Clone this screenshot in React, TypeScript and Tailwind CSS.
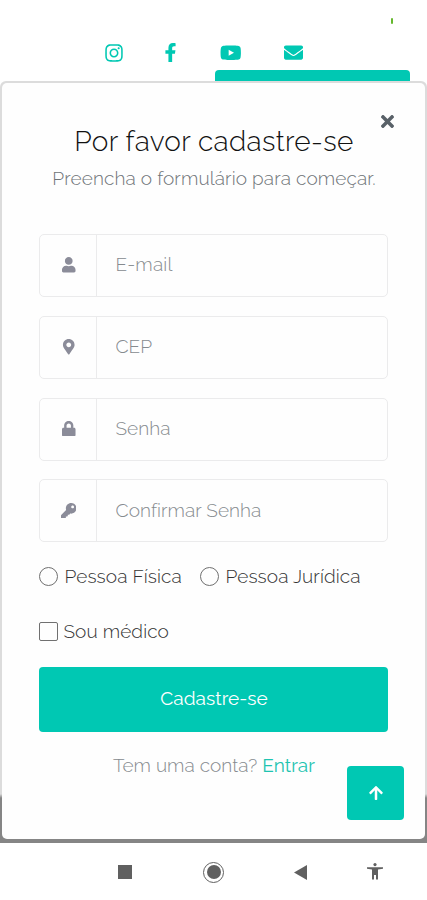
import React from 'react';
import type { IconType } from 'react-icons';
import {
  FaArrowUp,
  FaEnvelope,
  FaFacebookF,
  FaInstagram,
  FaKey,
  FaLock,
  FaMapMarkerAlt,
  FaTimes,
  FaUser,
  FaYoutube,
} from 'react-icons/fa';

interface FieldProps {
  icon: IconType;
  label: string;
  type?: string;
  spacing: string;
}

const Field: React.FC<FieldProps> = ({ icon: Icon, label, type = 'text', spacing }) => (
  <div className="flex h-[63px] overflow-hidden rounded-[5px] border border-[#ebebec]">
    <span className="flex w-[57px] shrink-0 items-center justify-center border-r border-[#ebebec] pb-px pl-px text-[#8b8c99]">
      <Icon className="size-[15.5px]" />
    </span>
    <input
      type={type}
      placeholder={label}
      aria-label={label}
      className={`min-w-0 flex-1 bg-transparent pl-[18.5px] pb-[2px] text-[19px] font-light text-[#777c80] outline-none placeholder:text-[#868b8f] ${spacing}`}
    />
  </div>
);

const SocialHeader = () => (
  <header className="flex h-[81px] flex-col">
    <div className="flex h-[42px] justify-end pt-[18px] pr-[34px]">
      <span className="h-[6px] w-[2px] rounded-full bg-[#66b82e]" />
    </div>
    <div className="flex h-[21px] items-center pl-[104px] text-[#00c8b3]">
      <FaInstagram className="size-[20px]" />
      <FaFacebookF className="ml-[37px] size-[19px]" />
      <FaYoutube className="ml-[39.5px] size-[21.5px]" />
      <FaEnvelope className="ml-[42.5px] size-[19px]" />
    </div>
    <div className="mt-[7px] mr-[17px] ml-[215px] flex-1 rounded-t-[4px] bg-[#00c8b3]" />
  </header>
);

const RegisterForm = () => (
  <form className="mt-[43px] px-[37px]" onSubmit={(e) => e.preventDefault()}>
    <div className="flex flex-col gap-[18.8px]">
      <Field icon={FaUser} label="E-mail" spacing="tracking-[0.2px]" />
      <Field icon={FaMapMarkerAlt} label="CEP" spacing="tracking-[0px]" />
      <Field icon={FaLock} label="Senha" type="password" spacing="tracking-[0.1px]" />
      <Field icon={FaKey} label="Confirmar Senha" type="password" spacing="tracking-[0.07px]" />
    </div>

    <div className="mt-[20px] flex h-[28px] items-center text-[19px] font-light tracking-[0.1px] whitespace-nowrap text-[#333]">
      <label className="flex w-[161px] items-center gap-[6.5px]">
        <input type="radio" name="pessoa" className="size-[19px] shrink-0 appearance-none rounded-full border border-[#707070]" />
        Pessoa Física
      </label>
      <label className="flex items-center gap-[6.5px]">
        <input type="radio" name="pessoa" className="size-[19px] shrink-0 appearance-none rounded-full border border-[#707070]" />
        Pessoa Jurídica
      </label>
    </div>

    <label className="mt-[27px] flex h-[28px] items-center gap-[5.5px] text-[19px] font-light tracking-[0.1px] text-[#333]">
      <input type="checkbox" className="size-[19px] appearance-none rounded-[2px] border border-[#707070]" />
      Sou médico
    </label>

    <button className="mt-[22px] h-[65px] w-full rounded-[4px] bg-[#00c8b3] pb-[3px] pl-px text-[19px] tracking-[0.05px] text-white">
      Cadastre-se
    </button>
  </form>
);

const NavigationBar = () => (
  <nav className="flex h-[57px] items-center bg-white pt-px pl-[118px] text-[#606060]">
    <span className="size-[14px] bg-[#606060]" />
    <span className="ml-[71px] flex size-[21px] items-center justify-center rounded-full border-[1.5px] border-[#606060]">
      <span className="size-[14px] rounded-full bg-[#606060]" />
    </span>
    <svg viewBox="0 0 13 15" className="ml-[70px] h-[15px] w-[13px] fill-current">
      <path d="M13 0v15L0 7.5z" />
    </svg>
    <svg viewBox="0 0 16 18" className="ml-[60px] h-[18px] w-[16px] fill-current">
      <circle cx="8" cy="1.6" r="1.6" />
      <path d="M0 4.2h16v1.6l-5 .7V16.5H9V12H7v4.5H5v-10l-5-.7z" />
    </svg>
  </nav>
);

export default function App() {
  return (
    <div className="h-[900px] w-[427px] overflow-hidden bg-white font-['Raleway','Lato',sans-serif]">
      <SocialHeader />
      <main className="h-[762px] rounded-t-[6px] bg-[linear-gradient(to_bottom,#dcdcdc_713px,#858585_717px)] px-[2px] pt-[2px] pb-[4px]">
        <section className="relative h-full rounded-[5px] bg-[#fefefe] pt-[39px]">
          <button aria-label="Fechar" className="absolute top-[29px] right-[28.5px] text-[#596168]">
            <FaTimes className="size-[19px]" />
          </button>
          <h1 className="pl-px text-center text-[28px] leading-[40px] font-light tracking-[0.35px] text-[#111]">
            Por favor cadastre-se
          </h1>
          <p className="mt-[3px] pl-px text-center text-[19px] leading-[26px] font-light tracking-[0.12px] text-[#6f7478]">
            Preencha o formulário para começar.
          </p>
          <RegisterForm />
          <p className="mt-[19px] pl-px text-center text-[19px] leading-[28px] font-light tracking-[0.05px] text-[#868b8f]">
            Tem uma conta? <a className="font-normal text-[#1fc4b1]">Entrar</a>
          </p>
          <button
            aria-label="Voltar ao topo"
            className="absolute top-[683px] right-[21px] flex h-[54px] w-[57px] items-center justify-center rounded-[4px] bg-[#00c8b3] text-white"
          >
            <FaArrowUp className="size-[16px]" />
          </button>
        </section>
      </main>
      <NavigationBar />
    </div>
  );
}
